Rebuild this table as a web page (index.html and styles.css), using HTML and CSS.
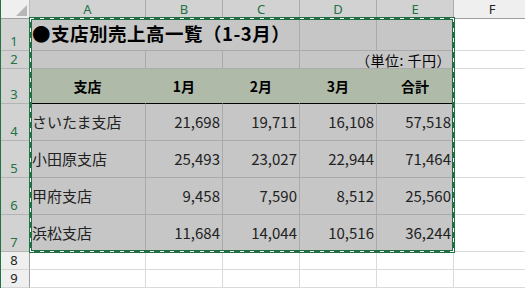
FILE: index.html
```html
<!DOCTYPE html>
<html lang="ja">
<head>
<meta charset="utf-8">
<link rel="stylesheet" href="styles.css">
</head>
<body>
<div class="wrap">
<div class="sheet">
  <div class="corner"><span class="tri"></span></div>
  <div class="ch sel">A</div>
  <div class="ch sel">B</div>
  <div class="ch sel">C</div>
  <div class="ch sel">D</div>
  <div class="ch sel">E</div>
  <div class="ch">F</div>

  <div class="rh sel">1</div>
  <div class="c s title span3">●支店別売上高一覧（1-3月）</div>
  <div class="c s"></div>
  <div class="c s"></div>
  <div class="c"></div>

  <div class="rh sel">2</div>
  <div class="c s"></div>
  <div class="c s"></div>
  <div class="c s"></div>
  <div class="c s unit span2">（単位: 千円）</div>
  <div class="c"></div>

  <div class="rh sel">3</div>
  <div class="c hd">支店</div>
  <div class="c hd">1月</div>
  <div class="c hd">2月</div>
  <div class="c hd">3月</div>
  <div class="c hd">合計</div>
  <div class="c"></div>

  <div class="rh sel">4</div>
  <div class="c s name">さいたま支店</div>
  <div class="c s num">21,698</div>
  <div class="c s num">19,711</div>
  <div class="c s num">16,108</div>
  <div class="c s num">57,518</div>
  <div class="c"></div>

  <div class="rh sel">5</div>
  <div class="c s name">小田原支店</div>
  <div class="c s num">25,493</div>
  <div class="c s num">23,027</div>
  <div class="c s num">22,944</div>
  <div class="c s num">71,464</div>
  <div class="c"></div>

  <div class="rh sel">6</div>
  <div class="c s name">甲府支店</div>
  <div class="c s num">9,458</div>
  <div class="c s num">7,590</div>
  <div class="c s num">8,512</div>
  <div class="c s num">25,560</div>
  <div class="c"></div>

  <div class="rh sel">7</div>
  <div class="c s name">浜松支店</div>
  <div class="c s num">11,684</div>
  <div class="c s num">14,044</div>
  <div class="c s num">10,516</div>
  <div class="c s num">36,244</div>
  <div class="c"></div>

  <div class="rh">8</div>
  <div class="c"></div>
  <div class="c"></div>
  <div class="c"></div>
  <div class="c"></div>
  <div class="c"></div>
  <div class="c"></div>

  <div class="rh">9</div>
  <div class="c"></div>
  <div class="c"></div>
  <div class="c"></div>
  <div class="c"></div>
  <div class="c"></div>
  <div class="c"></div>
</div>
<div class="overlay">
  <div class="ants"></div>
</div>
</div>
</body>
</html>
```
FILE: styles.css
```css
* { box-sizing: border-box; }
html, body {
  margin: 0;
  padding: 0;
  background: #fff;
  overflow: hidden;
  width: 525px;
  height: 288px;
}
.wrap {
  display: grid;
  width: 532px;
}
.sheet, .overlay {
  grid-area: 1 / 1;
  display: grid;
  grid-template-columns: 29px 116px 77px 77px 77px 77px 77px;
  grid-template-rows: 19px 32px 18px 35px 37px 37px 37px 37px 18px 18px;
  border-left: 1px solid #217346;
}
.sheet {
  font-family: "Noto Sans CJK JP", "Noto Sans", sans-serif;
  color: #222;
  text-spacing-trim: space-all;
}
.overlay {
  border-left-color: transparent;
  pointer-events: none;
}
.corner {
  background: #efefef;
  border-right: 1px solid #bdbdbd;
  border-bottom: 1px solid #9e9e9e;
  display: flex;
  justify-content: flex-end;
  align-items: flex-end;
  padding: 0 2px 2px 0;
}
.tri {
  width: 11px;
  height: 11px;
  background: #b7b7b7;
  clip-path: polygon(100% 0, 100% 100%, 0 100%);
}
.ch {
  background: #efefef;
  border-right: 1px solid #d4d4d4;
  border-bottom: 1px solid #9e9e9e;
  font-family: "Noto Sans", sans-serif;
  font-size: 13px;
  line-height: 18px;
  text-align: center;
  color: #222;
}
.ch.sel {
  background: #d2d2d2;
  color: #217346;
  border-right-color: #ababab;
  border-bottom: 2px solid #217346;
}
.rh {
  background: #efefef;
  border-right: 1px solid #9e9e9e;
  border-bottom: 1px solid #d4d4d4;
  font-family: "Noto Sans", sans-serif;
  font-size: 13px;
  line-height: 15px;
  display: flex;
  align-items: flex-end;
  justify-content: center;
  padding: 0 2px 1px 0;
  color: #222;
}
.rh.sel {
  background: #d2d2d2;
  color: #217346;
  border-right: 1px solid #217346;
  border-bottom-color: #b4b4b4;
}
.c {
  background: #fff;
  border-right: 1px solid #dadada;
  border-bottom: 1px solid #dadada;
  white-space: nowrap;
  display: flex;
  align-items: center;
  font-size: 15px;
}
.c.s {
  background: #c6c6c6;
  border-color: #aaaaaa;
}
.span3 { grid-column: span 3; }
.span2 { grid-column: span 2; }
.title {
  background: linear-gradient(to right, #fff 115px, #c6c6c6 115px);
  font-size: 18.5px;
  font-weight: bold;
  letter-spacing: 0.5px;
  padding: 0 0 3px 2px;
  color: #000;
}
.unit {
  justify-content: flex-end;
  font-size: 14px;
  letter-spacing: 0.5px;
  padding-right: 2px;
  color: #000;
}
.hd {
  background: #afbba8;
  border-right-color: #afbba8;
  border-bottom: 1px solid #000;
  justify-content: center;
  font-size: 14px;
  font-weight: bold;
  color: #000;
}
.name { padding: 0 0 2px 2px; }
.num { justify-content: flex-end; padding: 0 2px 2px 0; }
.ants {
  grid-column: 2 / 7;
  grid-row: 2 / 9;
  margin: -2px -1px -1px -1px;
  border: 3px solid #1f6f43;
  position: relative;
}
.ants::before {
  content: "";
  position: absolute;
  inset: -2px;
  background:
    repeating-linear-gradient(90deg, #fff 0 4px, transparent 4px 10px) left top / 100% 1px no-repeat,
    repeating-linear-gradient(90deg, #fff 0 4px, transparent 4px 10px) left bottom / 100% 1px no-repeat,
    repeating-linear-gradient(180deg, #fff 0 4px, transparent 4px 10px) left top / 1px 100% no-repeat,
    repeating-linear-gradient(180deg, #fff 0 4px, transparent 4px 10px) right top / 1px 100% no-repeat;
}
```
